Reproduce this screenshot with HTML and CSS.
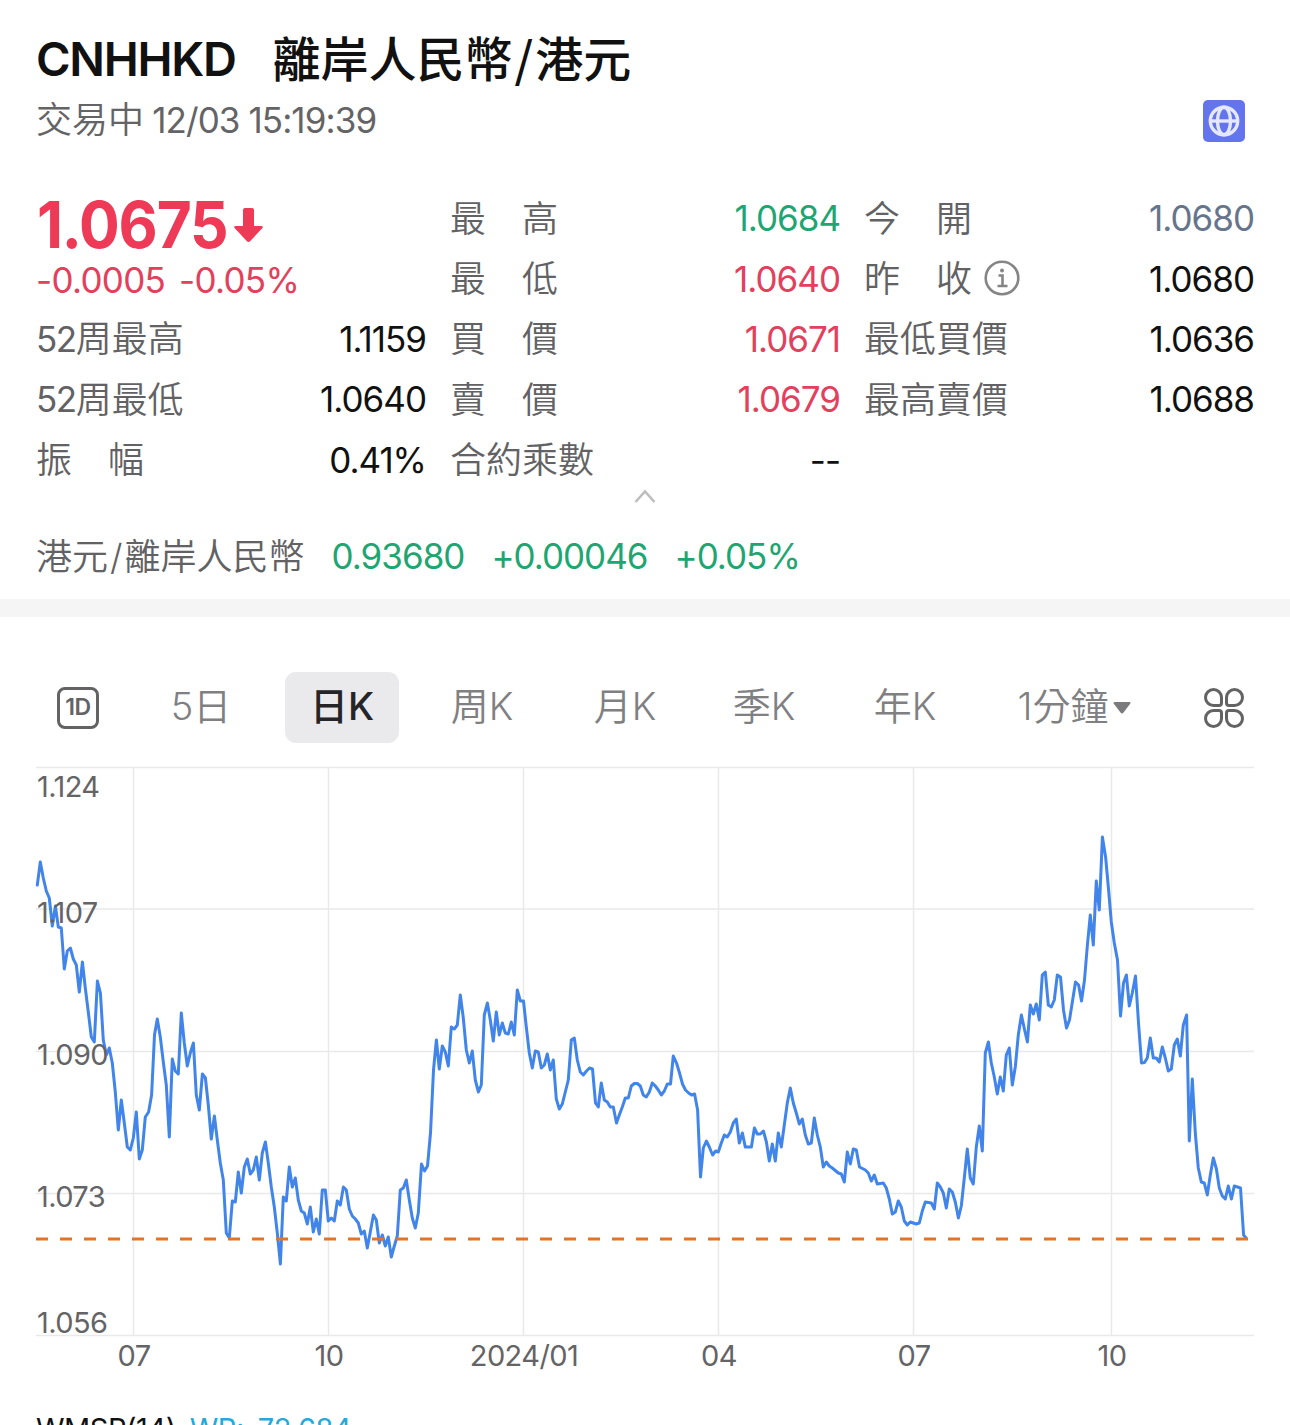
FILE: index.html
```html
<!DOCTYPE html>
<html lang="zh-Hant">
<head>
  <meta charset="UTF-8">
  <meta name="viewport" content="width=device-width, initial-scale=1.0">
  <title>CNHHKD 離岸人民幣/港元</title>
  <link rel="stylesheet" href="styles.css">
</head>
<body>
  <header class="header">
    <h1 class="title"><span class="symbol">CNHHKD</span><span class="name">離岸人民幣<span class="slash">/</span>港元</span></h1>
    <div class="status-row">
      <div class="status">交易中 <span class="time">12/03 15:19:39</span></div>
      <svg class="globe" viewBox="0 0 42 42">
        <rect width="42" height="42" rx="5" fill="#6474ec"/>
        <g fill="none" stroke="#e4e8ff" stroke-width="3.400">
          <circle cx="21" cy="21" r="13.700"/>
          <ellipse cx="21" cy="21" rx="6.500" ry="13.700"/>
          <path d="M7.500 21h27"/>
        </g>
      </svg>
    </div>
  </header>

  <section class="quote">
    <div class="price-box">
      <div class="price"><span class="price-value">1.0675</span>
        <svg class="arrow" viewBox="0 0 30 36"><path d="M9 3q0-2 2-2h7q2 0 2 2v16h7q3 0 1.200 2.300L16.300 34q-1.800 2-3.600 0L.8 21.300Q-1 19 2 19h7z" fill="#ee3a57"/></svg>
      </div>
      <div class="change"><span>-0.0005</span><span>-0.05%</span></div>
    </div>
    <div class="cell"><span class="label">最　高</span><span class="value green">1.0684</span></div>
    <div class="cell"><span class="label">今　開</span><span class="value slate">1.0680</span></div>
    <div class="cell"><span class="label">最　低</span><span class="value red">1.0640</span></div>
    <div class="cell"><span class="label">昨　收
      <svg class="info" viewBox="0 0 36 36" fill="none" stroke="#858585"><circle cx="18" cy="18" r="16.300" stroke-width="2.600"/><path d="M14.500 15.500H18.500V25.500M13.500 26H23.500" stroke-width="2.600"/><circle cx="18" cy="10.500" r="2" fill="#858585" stroke="none"/></svg></span><span class="value">1.0680</span></div>
    <div class="cell"><span class="label"><span class="num">52</span>周最高</span><span class="value">1.1159</span></div>
    <div class="cell"><span class="label">買　價</span><span class="value red">1.0671</span></div>
    <div class="cell"><span class="label">最低買價</span><span class="value">1.0636</span></div>
    <div class="cell"><span class="label"><span class="num">52</span>周最低</span><span class="value">1.0640</span></div>
    <div class="cell"><span class="label">賣　價</span><span class="value red">1.0679</span></div>
    <div class="cell"><span class="label">最高賣價</span><span class="value">1.0688</span></div>
    <div class="cell"><span class="label">振　幅</span><span class="value">0.41%</span></div>
    <div class="cell"><span class="label">合約乘數</span><span class="value">--</span></div>
  </section>

  <svg class="collapse" viewBox="0 0 22 16"><path d="M1.500 14L11 3.500L20.500 14" fill="none" stroke="#bdbdbd" stroke-width="2.600"/></svg>

  <div class="inverse">
    <span class="inverse-name">港元<span class="slash">/</span>離岸人民幣</span>
    <span>0.93680</span>
    <span>+0.00046</span>
    <span>+0.05%</span>
  </div>

  <div class="divider"></div>

  <nav class="tabs">
    <span class="tab"><span class="one-day">1D</span></span>
    <span class="tab">5日</span>
    <span class="tab active">日K</span>
    <span class="tab">周K</span>
    <span class="tab">月K</span>
    <span class="tab">季K</span>
    <span class="tab">年K</span>
    <span class="tab">1分鐘<svg class="caret" viewBox="0 0 18 12"><path d="M2 0h14q2.500 0 1 2L10.500 10.500q-1.500 2-3 0L1 2Q-.5 0 2 0z" fill="#7b7b7d"/></svg></span>
    <span class="tab icon-tab">
      <svg class="grid-icon" viewBox="0 0 40 40" fill="none" stroke="#636363" stroke-width="3">
        <path d="M9.500 1.500a8 8 0 0 1 8 8V15q0 2.500-2.500 2.500H9.500a8 8 0 0 1 0-16z"/>
        <path d="M30.500 1.500a8 8 0 0 0-8 8V15q0 2.500 2.500 2.500h5.500a8 8 0 0 0 0-16z"/>
        <path d="M9.500 38.500a8 8 0 0 0 8-8V25q0-2.500-2.500-2.500H9.500a8 8 0 0 0 0 16z"/>
        <path d="M30.500 38.500a8 8 0 0 1-8-8V25q0-2.500 2.500-2.500h5.500a8 8 0 0 1 0 16z"/>
      </svg>
    </span>
  </nav>

  <svg class="chart" viewBox="0 760 1290 620">
    <g class="grid-lines">
      <path d="M36 767.500H1254M36 909H1254M36 1051.500H1254M36 1193.500H1254M36 1335.500H1254"/>
      <path d="M133.500 767V1336M328.500 767V1336M523.500 767V1336M718.500 767V1336M913.500 767V1336M1111.500 767V1336"/>
    </g>
    <polyline class="price-line" points="
      37.3,885 40.3,862 43.3,878 46.3,891 49.3,898 52.3,926 55.4,906 58.3,927 61.3,928 64.3,969 67.3,951 70.4,948 73.3,959 76.3,965 79.3,992 82.4,962
      85.3,988 88.3,1012 91.3,1037 94.3,1042 97.4,981 100.4,993 103.3,1040 106.3,1055 109.3,1048 112.3,1063 115.3,1092 118.3,1130 121.3,1100 124.3,1123
      127.3,1147 130.3,1150 133.3,1138 136.3,1112 139.3,1159 142.3,1150 145.3,1117 148.6,1112 151.6,1095 154.5,1035 157.3,1019 160.3,1037 163.3,1062
      166.3,1085 169.3,1137 172.3,1059 175.3,1071 178.3,1074 181.3,1013 184.3,1043 187.3,1066 190.3,1053 193.4,1043 196.3,1095 199.3,1110 202.4,1074
      205.4,1078 208.3,1105 211.3,1139 214.4,1116 217.3,1140 220.3,1163 223.3,1180 226.3,1233 229.3,1238 232.3,1201 235.3,1202 238.3,1172 241.3,1193
      244.3,1167 247.3,1159 250.3,1174 253.3,1170 256.3,1157 259.3,1180 262.3,1153 265.4,1142 268.3,1163 271.3,1187 274.3,1207 277.3,1233 280.4,1264
      283.3,1197 286.3,1201 289.3,1167 292.3,1187 295.3,1178 298.3,1200 301.3,1211 304.3,1213 307.3,1224 310.3,1207 313.3,1232 316.3,1219 319.3,1234
      322.3,1190 325.3,1190 328.3,1221 331.3,1218 334.3,1221 337.3,1201 340.3,1205 343.4,1187 346.3,1190 349.3,1209 352.3,1216 355.3,1219 358.3,1223
      361.3,1234 364.3,1231 367.3,1248 370.3,1232 373.4,1215 376.3,1220 379.3,1243 382.3,1235 385.3,1246 388.3,1237 391.3,1257 394.3,1246 397.3,1236
      400.3,1190 403.3,1188 406.3,1180 409.3,1200 412.3,1218 415.3,1228 418.3,1213 421.5,1164 424.5,1171 427.5,1166 430.5,1133 433.5,1070 436.4,1040
      439.3,1069 442.3,1046 445.3,1052 448.3,1066 451.3,1027 454.3,1029 457.3,1025 460.3,995 463.3,1018 466.3,1050 469.3,1063 472.3,1051 475.3,1080
      478.4,1092 481.3,1085 484.3,1015 487.4,1003 490.3,1020 493.3,1041 496.3,1012 499.3,1035 502.3,1023 505.3,1033 508.3,1034 511.3,1022 514.3,1035
      517.3,990 520.3,1001 523.5,1001 526.3,1027 529.3,1053 532.3,1068 535.3,1051 538.3,1052 541.3,1068 544.3,1065 547.3,1054 550.3,1070 553.3,1060
      556.3,1099 559.3,1109 562.3,1104 565.3,1092 568.3,1080 571.3,1040 574.3,1038 577.3,1060 580.3,1072 583.3,1075 586.5,1071 589.5,1068 592.5,1069
      595.5,1103 598.3,1107 601.3,1083 604.3,1100 607.3,1102 610.3,1107 613.3,1107 616.5,1123 619.3,1115 622.3,1107 625.3,1098 628.3,1098 631.3,1086
      634.3,1083.500 637.3,1083.500 640.3,1086 643.3,1095 646.3,1097 649.3,1092 652.3,1083 655.3,1086 658.3,1090 661.3,1095 664.3,1091 667.3,1084 670.5,1084
      673.3,1056 676.5,1063 679.5,1073 682.5,1084 685.5,1090 688.6,1093 691.6,1095 694.6,1094 697.6,1110 700.5,1177 703.3,1148 706.4,1141 709.3,1147
      712.6,1155 715.6,1151 718.3,1152 721.3,1143 724.3,1135 727.3,1137 730.3,1132 733.3,1123 736.3,1119 739.3,1143 742.4,1133 745.3,1147 751.4,1147
      754.4,1128 757.3,1134 760.3,1134 763.4,1131 766.4,1142 769.3,1161 772.3,1144 775.3,1161 778.3,1133 781.3,1147 784.3,1125 787.3,1103 790.3,1088
      793.3,1103 796.3,1113 799.3,1124 802.3,1119 805.3,1135 808.3,1144 811.3,1143 814.3,1118 817.3,1135 820.3,1147 823.3,1167 826.3,1162 829.3,1166
      832.3,1168 838.3,1173 841.3,1174 844.3,1182 847.3,1152 850.3,1164 853.3,1149 856.3,1150 859.5,1167 865.3,1170 868.3,1173 871.3,1181 874.3,1175
      877.3,1184 883.3,1183 886.3,1188 889.3,1199 892.3,1214 895.3,1212 898.3,1201 901.3,1207 904.3,1221 907.3,1225 910.3,1222 916.3,1224 919.3,1223
      922.3,1211 925.3,1202 931.3,1203 934.3,1209 937.3,1183 940.3,1187 943.3,1193 946.3,1208 949.3,1189 952.3,1192 955.3,1202 958.4,1218 961.3,1206
      964.3,1178 967.3,1149 970.3,1178 973.3,1184 976.3,1147 979.3,1126 982.3,1151 985.3,1053 988.4,1042 991.3,1063 994.3,1077 997.3,1094 1000.3,1077
      1003.3,1091 1006.3,1055 1009.3,1048 1012.3,1085 1015.3,1067 1018.3,1035 1021.4,1015 1024.4,1029 1027.4,1042 1030.3,1005 1033.3,1014 1036.3,1004
      1039.3,1020 1042.3,975 1045.3,972 1048.3,1005 1051.3,1007 1054.3,1000 1057.3,975 1060.5,977 1063.5,1010 1066.5,1028 1069.5,1020 1072.5,1001
      1075.5,982 1078.6,985 1081.5,1001 1084.5,980 1087.4,945 1090.3,915 1093.3,945 1096.3,881 1099.3,910 1102.4,837 1105.6,857 1108.6,890 1111.3,922
      1114.3,943 1117.5,960 1120.5,1016 1123.5,983 1126.4,975 1129.3,1006 1132.3,993 1135.5,976 1138.5,1023 1141.5,1063 1144.5,1062.500 1147.3,1058
      1150.3,1038 1153.3,1058 1156.3,1058 1159.3,1062 1162.3,1047 1165.3,1058 1168.3,1071 1171.3,1069 1174.3,1045 1177.3,1039 1180.3,1056 1183.3,1025
      1186.6,1015 1189.3,1141 1192.3,1079 1195.3,1133 1198.3,1168 1201.3,1182 1204.3,1183 1207.3,1195 1210.3,1175 1213.3,1158 1216.4,1169 1219.3,1188
      1222.3,1196 1225.3,1199 1228.3,1186 1231.4,1199 1234.3,1186 1240.5,1188 1243.6,1235 1246,1238"/>
    <path class="last-price" d="M36 1239H1248"/>
    <g class="axis-text">
      <text x="37" y="797">1.124</text>
      <text x="37" y="923">1.107</text>
      <text x="37" y="1065">1.090</text>
      <text x="37" y="1207">1.073</text>
      <text x="37" y="1333">1.056</text>
      <g text-anchor="middle">
        <text x="134" y="1366">07</text>
        <text x="329" y="1366">10</text>
        <text x="524" y="1366">2024/01</text>
        <text x="719" y="1366">04</text>
        <text x="914" y="1366">07</text>
        <text x="1112" y="1366">10</text>
      </g>
    </g>
  </svg>

  <div class="indicator"><span>WMSR(14)</span><span class="wr">WR:</span><span class="wr">72.684</span></div>
</body>
</html>
```
FILE: styles.css
```css
* {
  box-sizing: border-box;
}
body {
  margin: 0;
  height: 1425px;
  overflow: hidden;
  background: #fff;
  color: #111;
  font-family: Inter, "Noto Sans CJK TC", sans-serif;
  font-size: 35px;
}
.header {
  padding: 28px 45px 0 36px;
}
.title {
  display: flex;
  gap: 37px;
  margin: 0;
  height: 62px;
  line-height: 62px;
  font-size: 47px;
  font-weight: 600;
}
.symbol {
  letter-spacing: -1.3px;
}
.name {
  font-size: 48px;
  font-family: "Noto Sans CJK TC", sans-serif;
  font-weight: 500;
  line-height: 57px;
}
.slash {
  padding: 0 2px;
}
.status-row {
  display: flex;
  justify-content: space-between;
  align-items: center;
  height: 62px;
  color: #646466;
}
.status {
  padding-bottom: 8px;
  font-size: 36px;
  font-weight: 350;
  white-space: nowrap;
}
.time {
  margin-left: -2px;
  font-size: 35px;
  font-weight: 400;
  letter-spacing: -0.9px;
}
.globe {
  width: 42px;
  height: 42px;
}
.quote {
  display: grid;
  grid-template-columns: repeat(3, 390px);
  grid-auto-rows: 60.4px;
  column-gap: 24px;
  padding: 36px 36px 0;
}
.price-box {
  grid-row: span 2;
  color: #ee3a57;
}
.price {
  display: flex;
  align-items: center;
  height: 70px;
  padding: 3px 0 0 1px;
  font-size: 65px;
  font-weight: 700;
  line-height: 66px;
}
/* digits are drawn slightly condensed */
.price-value {
  width: 188px;
  letter-spacing: -1.3px;
  transform: scaleX(0.93);
  transform-origin: left;
}
.arrow {
  width: 30px;
  height: 36px;
  margin: 1px 0 0 9px;
}
.change {
  display: flex;
  gap: 14px;
  line-height: 44px;
  letter-spacing: -0.7px;
  color: #e2405c;
}
.cell {
  display: flex;
  justify-content: space-between;
  align-items: center;
  white-space: nowrap;
}
.label {
  display: flex;
  align-items: center;
  padding-bottom: 5px;
  color: #626264;
  font-size: 36px;
  font-weight: 350;
}
.num {
  padding-top: 5px;
  font-size: 35px;
  font-weight: 400;
  letter-spacing: -1.5px;
}
.value {
  letter-spacing: -1px;
}
.info {
  width: 36px;
  height: 36px;
  margin: 4px 0 0 12px;
}
.green {
  color: #1ea672;
}
.red {
  color: #e2405c;
}
.slate {
  color: #66758c;
}
.collapse {
  display: block;
  width: 22px;
  height: 16px;
  margin: -2px auto 0;
}
.inverse {
  display: flex;
  align-items: center;
  gap: 27px;
  height: 60px;
  margin-top: 22px;
  padding-left: 36px;
  color: #1ea672;
  letter-spacing: -1px;
}
.inverse-name {
  padding-bottom: 4px;
  color: #626264;
  font-size: 36px;
  font-weight: 350;
  letter-spacing: 0;
}
.divider {
  height: 18px;
  margin-top: 13.5px;
  background: #f5f5f5;
}
.tabs {
  display: grid;
  grid-template-columns: 84px 162px 120px 160px 126px 152px 130px 209px 90px;
  height: 71px;
  margin-top: 55px;
  padding-left: 36px;
}
.tab {
  display: flex;
  align-items: center;
  justify-content: center;
  padding-bottom: 8px;
  color: #808082;
  font-size: 38px;
  font-weight: 350;
}
.tab:first-child,
.icon-tab {
  padding-bottom: 0;
}
.active {
  margin: 0 3px;
  border-radius: 11px;
  background: #eaeaec;
  color: #252527;
  font-weight: 500;
}
.one-day {
  width: 42px;
  height: 42px;
  border: 3px solid #636363;
  border-radius: 8px;
  color: #636363;
  font-size: 23px;
  font-weight: 600;
  line-height: 35px;
  text-align: center;
  letter-spacing: -0.5px;
}
.caret {
  width: 18px;
  height: 12px;
  margin: 8px 0 0 5px;
}
.grid-icon {
  width: 40px;
  height: 40px;
}
.chart {
  display: block;
  width: 1290px;
  height: 620px;
  margin-top: 17px;
}
.grid-lines {
  fill: none;
  stroke: #e9e9e9;
  stroke-width: 1.5;
}
.price-line {
  fill: none;
  stroke: #4285ea;
  stroke-width: 3;
  stroke-linejoin: round;
  stroke-linecap: round;
}
.last-price {
  stroke: #df742b;
  stroke-width: 3;
  stroke-dasharray: 12 12;
}
.axis-text {
  fill: #646466;
  font-size: 29px;
  letter-spacing: -0.6px;
}
.indicator {
  display: flex;
  gap: 14px;
  margin-top: 31px;
  padding-left: 36px;
  font-size: 29px;
  line-height: 36px;
  letter-spacing: -0.5px;
}
.wr {
  color: #26a9d8;
}
```
